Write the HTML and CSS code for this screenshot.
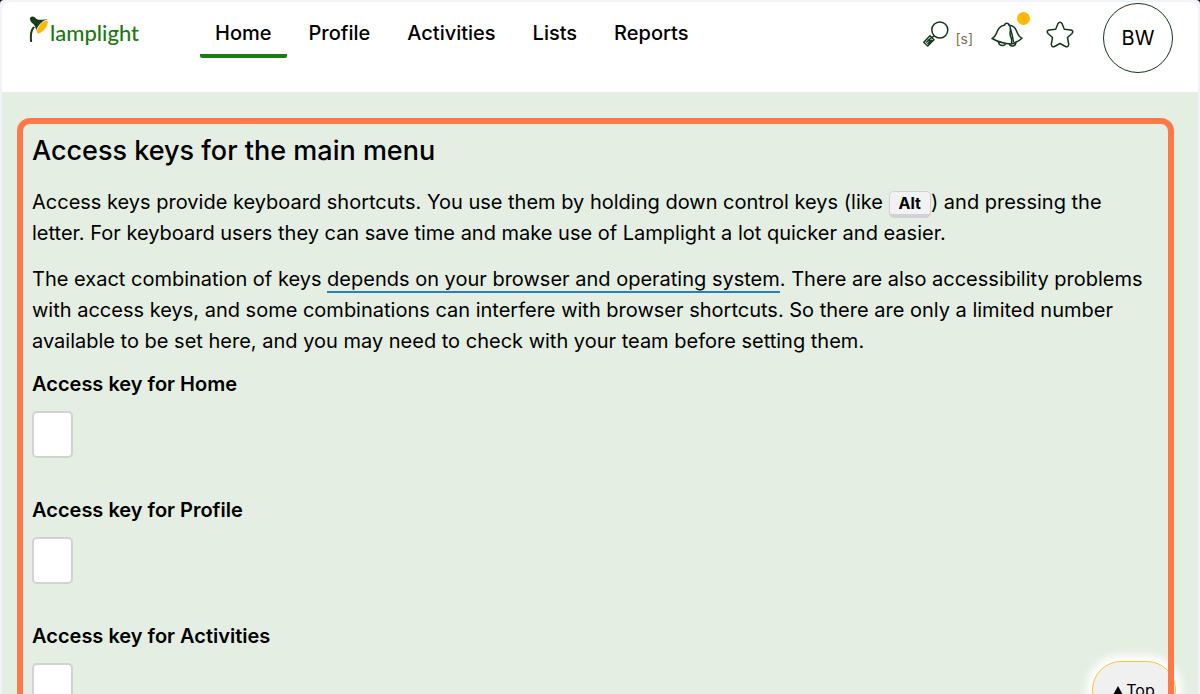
FILE: index.html
```html
<!DOCTYPE html>
<html lang="en">
<head>
<meta charset="utf-8">
<meta name="viewport" content="width=device-width, initial-scale=1">
<title>Lamplight - Access keys</title>
<link rel="stylesheet" href="styles.css">
</head>
<body>
<div class="window">
  <header class="topbar">
    <a class="logo" href="#">
      <svg class="logo-lamp" viewBox="0 0 20 28" aria-hidden="true">
        <path d="M1.200 27C.5 20 1 14 4.500 11.500L6 12.500C3.200 15 2.400 20 3.200 27Z" fill="#163d16"/>
        <path d="M1 4.500C0 2.500 3 .5 5.500 2C6.500 3 7.500 4.500 9.500 4.700C12 5.200 15 4 18.500 4.500L8 17.500C6.500 15 7.200 12.500 5.200 10C4.500 8.800 1.500 7.500 1 4.500Z" fill="#163d16"/>
        <ellipse cx="13.400" cy="12" rx="3.500" ry="8.300" transform="rotate(40 13.400 12)" fill="#ffb800" stroke="#fff" stroke-width=".8"/>
      </svg>
      <span class="logo-name">lamplight</span>
    </a>
    <nav class="menu" aria-label="Main menu">
      <a class="menu-link current" href="#">Home</a>
      <a class="menu-link" href="#">Profile</a>
      <a class="menu-link" href="#">Activities</a>
      <a class="menu-link" href="#">Lists</a>
      <a class="menu-link" href="#">Reports</a>
    </nav>
    <div class="tools">
      <button class="tool search" type="button" aria-label="Search">
        <svg width="26" height="26" viewBox="0 0 26 26" aria-hidden="true">
          <circle cx="16.800" cy="9" r="8"/>
          <path d="M11 14.800L8.500 17.300M7 14.700L11 18.700L4.700 25L.8 21.300ZM3.200 21.500L8 17M4.500 23L9 18.700M5 18.500L7.500 21"/>
        </svg>
        <span class="hint">[s]</span>
      </button>
      <button class="tool alerts" type="button" aria-label="Notifications">
        <svg width="32" height="26" viewBox="0 0 32 26" aria-hidden="true">
          <path d="M1 17.500C7.500 15 4 6 13.800 4C13.800 1.500 17.800 1.500 17.800 4C22 7 17 12 20 16.500C21.200 18.500 20.500 20.500 20.500 23Q10 22.500 1 17.500Z"/>
          <path d="M17.800 4C27.500 5 24.500 15 31 17.300Q27 21 20.500 23M7.500 21C8 25.500 14 25.500 14.500 22.500M18.500 23C19 26 25 26 25 21M19.500 8Q21.500 14 22.500 21"/>
        </svg>
        <span class="dot"></span>
      </button>
      <button class="tool star" type="button" aria-label="Favourites">
        <svg width="28" height="27" viewBox="0 0 28 27" aria-hidden="true">
          <path d="M12 2.500Q14 0 16 2.500L18.300 8.200L25 9Q28 10 26 12.500L21.500 16.500L22.700 23Q22.500 26.500 19.500 25.500L14 22.500L8.500 25.500Q5.500 26.500 5.300 23L6.500 16.500L2 12.500Q0 10 3 9L9.700 8.200Z"/>
        </svg>
      </button>
      <button class="avatar" type="button">BW</button>
    </div>
  </header>
  <main class="page">
    <section class="panel">
      <h1 class="title">Access keys for the main menu</h1>
      <p class="text">Access keys provide keyboard shortcuts. You use them by holding down control keys (like <kbd class="key">Alt</kbd>) and pressing the letter. For keyboard users they can save time and make use of Lamplight a lot quicker and easier.</p>
      <p class="text">The exact combination of keys <a class="link" href="#">depends on your browser and operating system</a>. There are also accessibility problems with access keys, and some combinations can interfere with browser shortcuts. So there are only a limited number available to be set here, and you may need to check with your team before setting them.</p>
      <form class="fields">
        <div class="field"><label class="label" for="k1">Access key for Home</label><input class="box" id="k1" type="text" maxlength="1"></div>
        <div class="field"><label class="label" for="k2">Access key for Profile</label><input class="box" id="k2" type="text" maxlength="1"></div>
        <div class="field"><label class="label" for="k3">Access key for Activities</label><input class="box" id="k3" type="text" maxlength="1"></div>
      </form>
    </section>
    <button class="to-top" type="button"><svg width="10" height="9" viewBox="0 0 10 9" aria-hidden="true"><path d="M5 0L10 9H0Z"/></svg>Top</button>
  </main>
</div>
</body>
</html>
```
FILE: styles.css
```css
* { box-sizing: border-box; }
html { background: #000; }
body {
  margin: 0;
  font-family: Inter, "Liberation Sans", sans-serif;
  font-size: 20px;
  color: #000;
}
button { font: inherit; color: inherit; cursor: pointer; }
.window {
  display: flex;
  flex-direction: column;
  height: 100vh;
  padding: 2px 2px 0;
  overflow: hidden;
  background: #f3f2f8;
  border-radius: 4px 4px 0 0;
}
.topbar {
  display: flex;
  align-items: flex-start;
  flex: none;
  height: 90px;
  padding: 0 25px 0 27px;
  background: #fff;
  border-radius: 8px 8px 0 0;
}
.logo {
  display: flex;
  gap: 1px;
  padding-top: 13px;
  color: #1a7a10;
  text-decoration: none;
}
.logo-lamp { width: 20px; height: 28px; }
.logo-name {
  padding-top: 4px;
  font-family: Lato, sans-serif;
  font-size: 22px;
  font-weight: 500;
  line-height: 28px;
}
.menu { display: flex; gap: 7px; margin-left: 61px; }
.menu-link {
  padding: 18px 15px 7px;
  border-bottom: 4px solid transparent;
  border-radius: 2px;
  font-weight: 500;
  line-height: 27px;
  color: inherit;
  text-decoration: none;
}
.menu-link.current { border-color: #1a7d12; }
.tools { display: flex; align-items: flex-start; margin-left: auto; }
.tool {
  display: flex;
  position: relative;
  padding: 0;
  border: 0;
  background: none;
}
.tool svg { fill: none; stroke: #14361a; stroke-width: 1.5; stroke-linejoin: round; }
.search { gap: 6px; margin-top: 19px; }
.hint { padding-top: 8px; font-size: 14px; line-height: 20px; color: #77705c; }
.alerts { margin: 19px 0 0 18px; }
.dot {
  position: absolute;
  top: -9px;
  right: -7px;
  width: 13px;
  height: 13px;
  border-radius: 50%;
  background: #ffb800;
}
.star { margin: 19px 0 0 23px; }
.avatar {
  width: 70px;
  height: 70px;
  margin: 1px 0 0 29px;
  padding: 0;
  border: 1px solid #14361a;
  border-radius: 50%;
  background: #fff;
}
.page {
  position: relative;
  flex: 1;
  min-height: 0;
  padding: 26px 24px 0 15px;
  overflow: hidden;
  background: #e4eee2;
}
.panel {
  position: relative;
  z-index: 1;
  padding: 9px 9px 40px;
  border: 6px solid #ff7847;
  border-radius: 13px;
}
.title { margin: 0 0 18px; font-size: 27px; font-weight: 500; line-height: 36px; }
.text { margin: 0 0 15px; line-height: 31px; }
.key {
  display: inline-block;
  padding: 0 9px;
  border: 1px solid #d2d2d6;
  border-bottom-width: 4px;
  border-radius: 5px;
  background: #f2f1f3;
  font-family: inherit;
  font-size: 16px;
  font-weight: 700;
  line-height: 22px;
}
.link { color: inherit; text-decoration: none; border-bottom: 2px solid #2a80b9; }
.field { margin-bottom: 40px; }
.label { display: block; margin-bottom: 14px; font-weight: 600; line-height: 25px; }
.box {
  display: block;
  width: 41px;
  height: 47px;
  padding: 0 8px;
  border: 2px solid #d2d2d2;
  border-radius: 5px;
  background: #fff;
  font: inherit;
}
.to-top {
  position: absolute;
  right: 22px;
  bottom: -25px;
  display: flex;
  justify-content: center;
  align-items: center;
  gap: 3px;
  width: 84px;
  height: 58px;
  padding: 0;
  border: 1px solid #ffc040;
  border-radius: 29px;
  background: #f0f0f0;
  box-shadow: 0 0 10px 6px #fff;
  font-size: 16px;
}
```
